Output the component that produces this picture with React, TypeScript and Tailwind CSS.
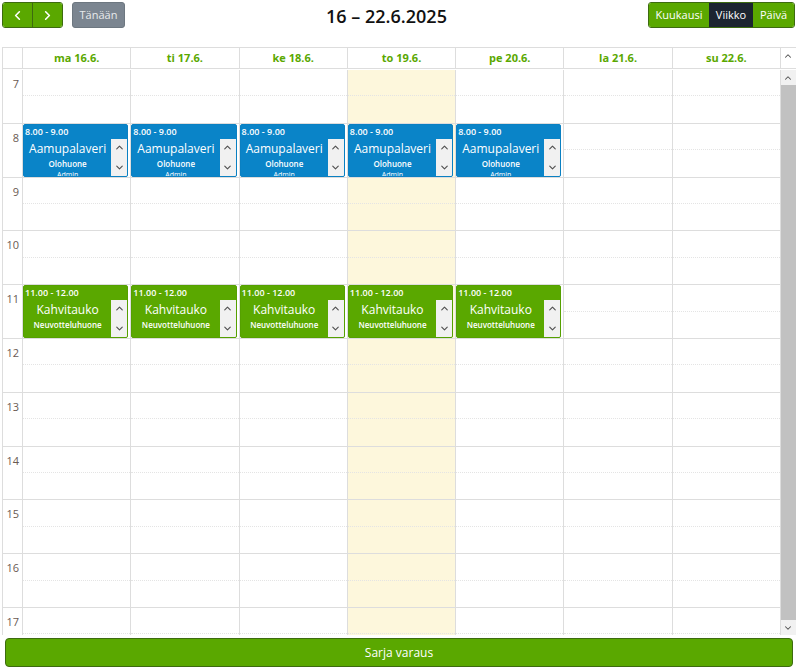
import { ChevronLeft, ChevronRight, ChevronUp, ChevronDown } from "lucide-react";

const days = [
  { label: "ma 16.6." },
  { label: "ti 17.6." },
  { label: "ke 18.6." },
  { label: "to 19.6.", today: true },
  { label: "pe 20.6." },
  { label: "la 21.6." },
  { label: "su 22.6." },
];

const hours = [7, 8, 9, 10, 11, 12, 13, 14, 15, 16, 17];

type Ev = { time: string; title: string; place: string; more: string; color: string };

const morning: Ev = {
  time: "8.00 - 9.00",
  title: "Aamupalaveri",
  place: "Olohuone",
  more: "Admin",
  color: "bg-[#0a84c8] border-[#0a80c2]",
};
const coffee: Ev = {
  time: "11.00 - 12.00",
  title: "Kahvitauko",
  place: "Neuvotteluhuone",
  more: "...",
  color: "bg-[#5aa800] border-[#55a000]",
};

function MiniScroll() {
  return (
    <div className="flex w-[16px] shrink-0 flex-col items-center justify-between bg-[#f1f1f1] py-[3px] text-[#505050]">
      <ChevronUp size={11} strokeWidth={2.5} />
      <ChevronDown size={11} strokeWidth={2.5} />
    </div>
  );
}

function EventBox({ ev }: { ev: Ev }) {
  return (
    <div className={`mr-[2px] flex h-full flex-col overflow-hidden rounded-[2px] border text-white ${ev.color}`}>
      <div className="h-[14px] pl-[1px] pt-[1px] text-[9px] font-semibold leading-[12px]">{ev.time}</div>
      <div className="flex min-h-0 flex-1">
        <div className="flex-1 overflow-hidden text-center">
          <div className="pt-[1px] text-[12px] leading-[17px]">{ev.title}</div>
          <div className="text-[8px] font-semibold leading-[14px]">{ev.place}</div>
          <div className="text-[7px] leading-[8px]">{ev.more}</div>
        </div>
        <MiniScroll />
      </div>
    </div>
  );
}

function Slot({ ev }: { ev?: Ev }) {
  return (
    <div className="h-[53.8px] border-b border-[#dddddd]">
      {ev ? (
        <EventBox ev={ev} />
      ) : (
        <div className="h-1/2 border-b border-dotted border-[#e4e4e4]" />
      )}
    </div>
  );
}

export default function App() {
  return (
    <div className="h-[668px] w-[798px] overflow-hidden bg-white font-['Open_Sans',sans-serif]">
      {/* toolbar */}
      <div className="flex h-[29px] items-start px-[2px] pt-[2px]">
        <div className="flex h-[26px] overflow-hidden rounded-[3px] border border-[#3d6b10]">
          <button className="flex w-[30px] items-center justify-center border-r border-[#3d6b10] bg-[#5aa800] text-white">
            <ChevronLeft size={15} strokeWidth={2.5} />
          </button>
          <button className="flex w-[29px] items-center justify-center bg-[#5aa800] text-white">
            <ChevronRight size={15} strokeWidth={2.5} />
          </button>
        </div>
        <button className="ml-[9px] h-[26px] w-[53px] rounded-[3px] border border-[#6d7780] bg-[#7b8590] text-[11px] text-[#e8eaec]">
          Tänään
        </button>
        <div className="flex-1 pt-[1px] text-center text-[18px] font-semibold leading-[26px] text-[#111]">
          16 – 22.6.2025
        </div>
        <div className="mr-[1px] flex h-[26px] overflow-hidden rounded-[3px] border border-[#3d6b10] text-[11px] text-white">
          <button className="w-[60px] bg-[#5aa800]">Kuukausi</button>
          <button className="w-[44px] bg-[#1c2530]">Viikko</button>
          <button className="w-[41px] bg-[#5aa800]">Päivä</button>
        </div>
      </div>

      {/* calendar */}
      <div className="mx-[2px] mt-[18px] border-l border-t border-[#dddddd]">
        <div className="flex h-[21px] border-b border-[#dddddd]">
          <div className="w-[19px] shrink-0" />
          {days.map((d) => (
            <div
              key={d.label}
              className="flex flex-1 items-center justify-center border-l border-[#dddddd] text-[11px] font-bold text-[#5aa800]"
            >
              {d.label}
            </div>
          ))}
          <div className="flex w-[16px] shrink-0 justify-center border-l border-[#dddddd] pt-[3px] text-[#505050]">
            <ChevronUp size={10} strokeWidth={2.5} />
          </div>
        </div>
        <div className="flex h-[566px] overflow-hidden pt-[1px]">
          <div className="w-[19px] shrink-0">
            {hours.map((h) => (
              <div key={h} className="h-[53.8px] border-b border-[#dddddd] pt-[6px] pr-[3px] text-right text-[11px] text-[#6a5a52]">
                {h}
              </div>
            ))}
          </div>
          {days.map((d, i) => (
            <div
              key={d.label}
              className={`flex-1 border-l border-[#dddddd] ${d.today ? "bg-[#fdf7dc]" : ""}`}
            >
              {hours.map((h) => (
                <Slot
                  key={h}
                  ev={i < 5 && h === 8 ? morning : i < 5 && h === 11 ? coffee : undefined}
                />
              ))}
            </div>
          ))}
          <div className="flex w-[16px] shrink-0 flex-col items-center border-l border-[#dddddd] bg-[#f1f1f1] text-[#505050]">
            <div className="flex h-[15px] items-center">
              <ChevronUp size={10} strokeWidth={2.5} />
            </div>
            <div className="w-full flex-1 bg-[#c1c1c1]" />
            <div className="flex h-[15px] items-center">
              <ChevronDown size={10} strokeWidth={2.5} />
            </div>
          </div>
        </div>
      </div>

      {/* footer */}
      <div className="px-[5px] pt-[3px]">
        <button className="h-[29px] w-full rounded-[4px] border border-[#3d6b10] bg-[#5aa800] text-[12px] text-white">
          Sarja varaus
        </button>
      </div>
    </div>
  );
}
